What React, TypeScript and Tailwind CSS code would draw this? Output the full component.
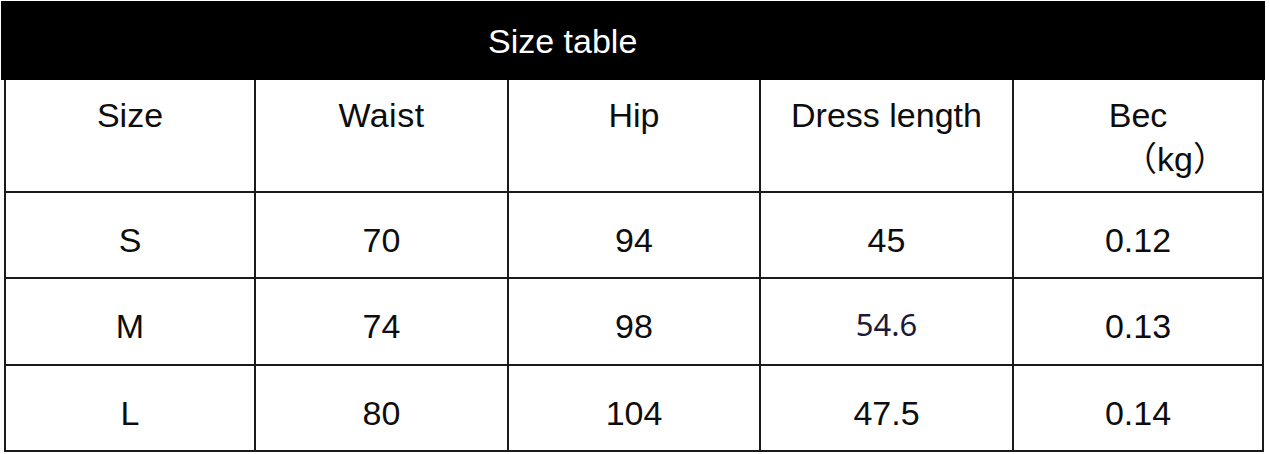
const rows = [
  { size: "S", waist: "70", hip: "94", length: "45", bec: "0.12" },
  { size: "M", waist: "74", hip: "98", length: "54.6", bec: "0.13" },
  { size: "L", waist: "80", hip: "104", length: "47.5", bec: "0.14" },
];

const font = "font-['Liberation_Sans','Noto_Sans_CJK_SC',Arial,sans-serif]";

export default function App() {
  return (
    <div className={`h-[454px] w-[1270px] overflow-hidden bg-white ${font} text-[34px] text-[#0d0d0d]`}>
      <div className="ml-[1px] mt-[1px] flex h-[79px] w-[1264px] items-center bg-black pl-[487px] text-white">
        <span className="leading-[40px]">Size table</span>
      </div>
      <div className="ml-[4px] w-[1260px] border-x-2 border-b-2 border-[#1a1a1a]">
        {/* header */}
        <div className="grid h-[113px] grid-cols-[250px_253px_252px_253px_248px] border-b-2 border-[#1a1a1a] text-center leading-[44px]">
          <div className="border-r-2 border-[#1a1a1a] pt-[13px]">Size</div>
          <div className="border-r-2 border-[#1a1a1a] pt-[13px] tracking-[0.5px]">Waist</div>
          <div className="border-r-2 border-[#1a1a1a] pt-[13px]">Hip</div>
          <div className="border-r-2 border-[#1a1a1a] pt-[13px]">Dress length</div>
          <div className="pt-[13px]">
            <span className="block">Bec</span>
            <span className="block pl-[74px]">（kg）</span>
          </div>
        </div>
        {rows.map((r, i) => (
          <div
            key={r.size}
            className={`grid grid-cols-[250px_253px_252px_253px_248px] text-center ${
              i === 0 ? "h-[86px] border-b-2 border-[#1a1a1a]" : i === 1 ? "h-[87px] border-b-2 border-[#1a1a1a]" : "h-[84px]"
            }`}
          >
            <div className="flex items-center justify-center border-r-2 border-[#1a1a1a] pt-[10px]">{r.size}</div>
            <div className="flex items-center justify-center border-r-2 border-[#1a1a1a] pt-[10px]">{r.waist}</div>
            <div className="flex items-center justify-center border-r-2 border-[#1a1a1a] pt-[10px]">{r.hip}</div>
            <div className="flex items-center justify-center border-r-2 border-[#1a1a1a] pt-[10px]">
              {r.length === "54.6" ? (
                <span className="-mt-[4px] font-['Noto_Sans',sans-serif] text-[31px] text-[#1c1a3a]">{r.length}</span>
              ) : (
                r.length
              )}
            </div>
            <div className="flex items-center justify-center pt-[10px]">{r.bec}</div>
          </div>
        ))}
      </div>
    </div>
  );
}
